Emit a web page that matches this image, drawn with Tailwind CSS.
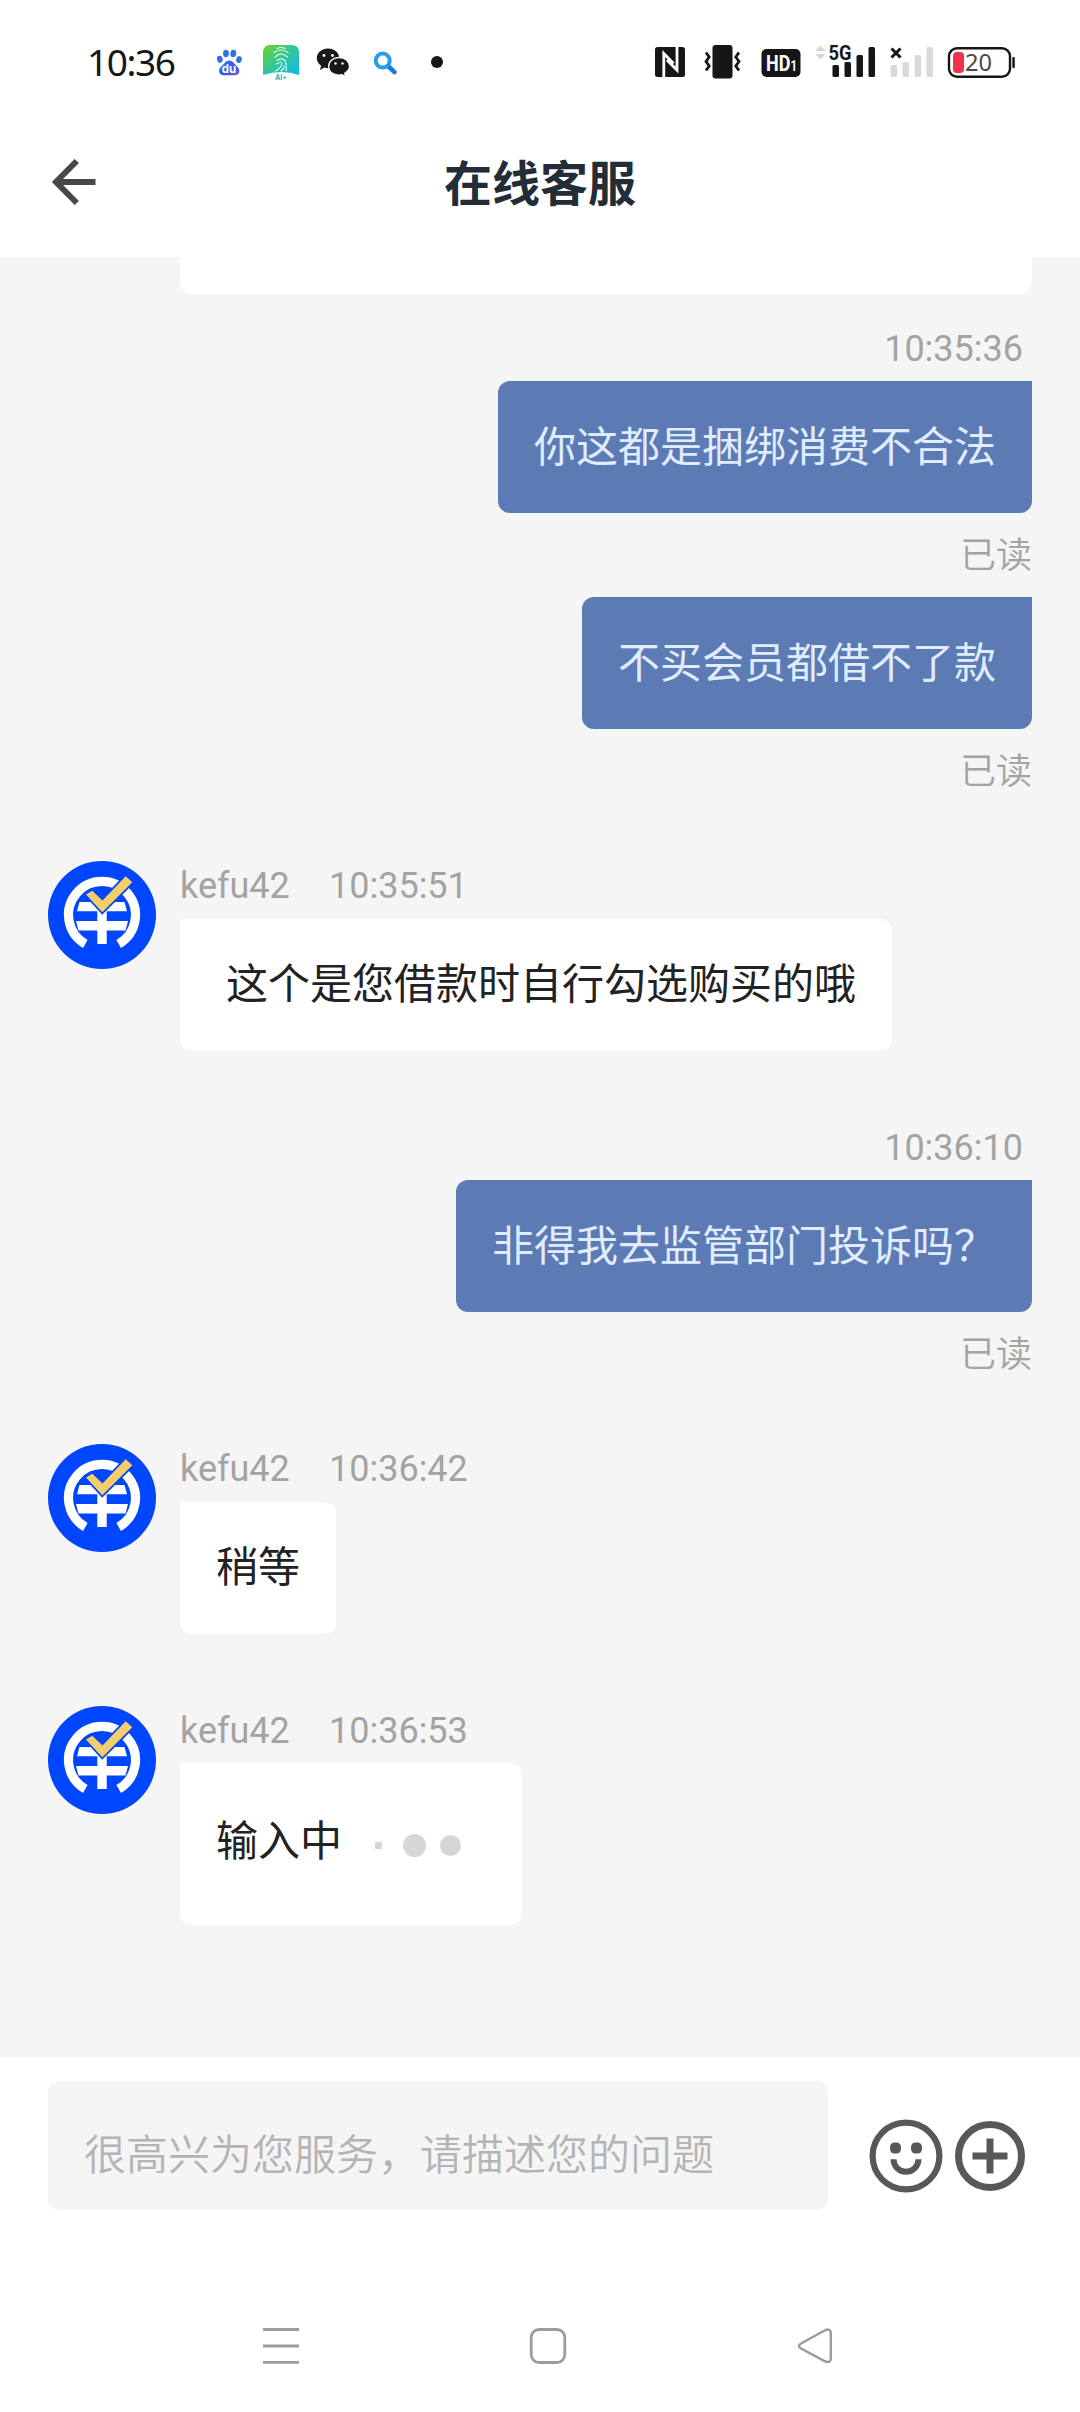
<!DOCTYPE html>
<html lang="zh-CN">
<head>
<meta charset="utf-8">
<title>在线客服</title>
<script src="https://cdn.jsdelivr.net/npm/@tailwindcss/browser@4"></script>
</head>
<body class="w-[1080px] h-[2412px] overflow-hidden bg-white flex flex-col font-['Roboto','Noto_Sans_CJK_SC',sans-serif]">

<!-- shared avatar artwork -->
<svg class="hidden">
  <symbol id="avatar" viewBox="0 0 108 108">
    <circle cx="54" cy="54" r="54" fill="#0046fe"/>
    <path d="M37.3 83A33.5 33.5 0 1 1 70.7 83" fill="none" stroke="#fff" stroke-width="9.2"/>
    <path d="M31.5 41H76.5L79 50.3H29ZM28 60H80L77.500 69.500H30.500ZM49.300 48H58.700V83H49.300Z" fill="#fff"/>
    <path d="M38 33.500L44.300 29.800L54.500 39.500L77.700 15.300L84.300 21.300L54.300 51.300Z" fill="#f4ce68" stroke="#0046fe" stroke-width="3.500" paint-order="stroke"/>
  </symbol>
</svg>

<!-- status bar -->
<div class="h-[105px] shrink-0 flex items-center pt-[19px] pl-[87px] pr-[65px] justify-between">
  <div class="flex items-center h-[44px]">
    <span class="w-[130px] text-[37px] leading-[44px] tracking-[-1.4px] text-[#161616] font-['Noto_Sans']">10:36</span>
    <svg class="w-[26px] h-[44px]" viewBox="217 40 26 44">
      <defs><linearGradient id="paw" x1="0" y1="0" x2="1" y2="1"><stop offset="0" stop-color="#2f7cf6"/><stop offset=".6" stop-color="#3558e4"/><stop offset="1" stop-color="#9a50e0"/></linearGradient></defs>
      <g fill="#3270ea"><ellipse cx="219.800" cy="59.300" rx="2.900" ry="3.600" transform="rotate(-12 219.800 59.300)"/><ellipse cx="226" cy="53.500" rx="2.900" ry="3.700"/><ellipse cx="233.300" cy="53.500" rx="2.900" ry="3.700" transform="rotate(10 233.300 53.500)"/><ellipse cx="239" cy="59.600" rx="2.800" ry="3.500" transform="rotate(12 239 59.600)"/></g>
      <path d="M229.300 60.500c4 0 5.200 4 8 6.200 3.500 2.800 2.500 8.500-2 8.500h-12c-4.500 0-5.700-5.500-2.200-8.500 3-2.400 4-6.200 8.200-6.200z" fill="url(#paw)"/>
      <text x="229" y="72.500" text-anchor="middle" font-family="Inter" font-weight="700" font-size="11.500" fill="#fff">du</text>
    </svg>
    <svg class="w-[36px] h-[44px] ml-[20px]" viewBox="263 40 36 44">
      <defs><linearGradient id="fp" x1="0" y1="0" x2="1" y2="1"><stop offset="0" stop-color="#74d22c"/><stop offset=".5" stop-color="#2fc79a"/><stop offset="1" stop-color="#12b5f2"/></linearGradient></defs>
      <path d="M270 45h22q7 0 7 8v22q-18-6-36 0V53q0-8 7-8z" fill="url(#fp)"/>
      <g fill="none" stroke="#e9fff5" stroke-width="1.100" stroke-linecap="round"><path d="M277 48.500q4-2 8 0M274 52.500q7-5 14 0M275 57q6-6 12.500 0M277 60.500q4-3.500 8 0q1.500 3 1.200 10M276 64q2.500 0 4.500-2.500M282 62.500q0 5-6.500 8.500M284 66q0 3-3 5"/></g>
      <text x="281" y="79.500" text-anchor="middle" font-family="Inter" font-weight="700" font-size="7" fill="#22b7b7">AI+</text>
    </svg>
    <svg class="w-[34px] h-[44px] ml-[17px]" viewBox="316 40 34 44">
      <path d="M328 48.500c-6.300 0-11.200 4.300-11.200 9.600 0 3.200 1.700 5.900 4.300 7.600L320 70l4.300-2.400c6.500 2 15-1.500 15-9.500 0-5.300-5-9.600-11.300-9.600z" fill="#181818"/>
      <path d="M339 57.500c-5.900 0-10.300 4-10.300 8.900 0 6.600 7.200 10 13.300 8.300l3.600 2-.9-3.500c2.700-1.600 4.800-4.200 4.800-6.800 0-4.900-4.600-8.900-10.500-8.900z" fill="#181818" stroke="#fff" stroke-width="1.300"/>
      <g fill="#fff"><circle cx="324" cy="55.500" r="1.400"/><circle cx="332.500" cy="55.500" r="1.400"/><circle cx="335.500" cy="63.500" r="1.200"/><circle cx="342.500" cy="63.500" r="1.200"/></g>
    </svg>
    <svg class="w-[34px] h-[44px] ml-[17px]" viewBox="367 40 34 44">
      <path d="M388 66L394.500 72.200" stroke="#1b78e8" stroke-width="4.500" stroke-linecap="round"/>
      <circle cx="382.700" cy="60.600" r="7" fill="none" stroke="#269ee8" stroke-width="4"/>
    </svg>
    <div class="size-[12px] rounded-full bg-[#161616] ml-[30px]"></div>
  </div>
  <div class="flex items-center h-[44px]">
    <svg class="w-[30px] h-[44px]" viewBox="655 40 30 44">
      <rect x="655" y="47" width="30" height="30" rx="2.500" fill="#161616"/>
      <path d="M663.800 77V53.500L673.500 63.500M677 47V70L667 60" fill="none" stroke="#fff" stroke-width="2.800"/>
    </svg>
    <svg class="w-[38px] h-[44px] ml-[18px]" viewBox="703 40 38 44">
      <rect x="712.500" y="45" width="20" height="33.500" rx="3" fill="#161616"/>
      <path d="M706 52.500l3.200 4.500-3.200 4.500 3.200 4.500-3.200 4.500M739 52.500l-3.200 4.500 3.200 4.500-3.200 4.500 3.200 4.500" fill="none" stroke="#161616" stroke-width="2.800"/>
    </svg>
    <svg class="w-[40px] h-[44px] ml-[20px]" viewBox="761 40 40 44">
      <rect x="761.500" y="49" width="39" height="28" rx="5" fill="#161616"/>
      <text x="766" y="71" font-family="Roboto" font-weight="700" font-size="22" textLength="31" lengthAdjust="spacingAndGlyphs" fill="#fff">HD<tspan font-size="14">1</tspan></text>
    </svg>
    <svg class="w-[60px] h-[44px] ml-[15px]" viewBox="816 40 60 44">
      <path d="M820.500 45.500l5 5.500h-10zM820.500 59.500l5-5.500h-10z" fill="#d5d5d5"/>
      <text x="828.500" y="59.700" font-family="Roboto" font-weight="700" font-size="20.500" textLength="23" lengthAdjust="spacingAndGlyphs" fill="#161616">5G</text>
      <g fill="#161616"><rect x="832.500" y="65" width="6.500" height="12" rx="1.500"/><rect x="844.500" y="62" width="6.500" height="15" rx="1.500"/><rect x="856.500" y="55" width="6.500" height="22" rx="1.500"/><rect x="868.500" y="47" width="6.500" height="30" rx="1.500"/></g>
    </svg>
    <svg class="w-[44px] h-[44px] ml-[14px]" viewBox="890 40 44 44">
      <path d="M891.500 48.500l9 9M900.500 48.500l-9 9" stroke="#161616" stroke-width="3"/>
      <g fill="#d9d9d9"><rect x="890.500" y="65" width="6.500" height="12" rx="1.500"/><rect x="902.500" y="62" width="6.500" height="15" rx="1.500"/><rect x="914.500" y="55" width="6.500" height="22" rx="1.500"/><rect x="926.500" y="47" width="6.500" height="30" rx="1.500"/></g>
    </svg>
    <svg class="w-[68px] h-[44px] ml-[13px]" viewBox="947 40 68 44">
      <rect x="949" y="48.200" width="61" height="28.600" rx="8" fill="#fff" stroke="#161616" stroke-width="2.400"/>
      <rect x="1012.300" y="57" width="2.500" height="11" rx="1" fill="#161616"/>
      <rect x="953" y="52" width="11" height="21" rx="4" fill="#ee334b"/>
      <text x="965" y="70.700" font-family="Noto Sans" font-size="23" fill="#4a4a4a" textLength="27" lengthAdjust="spacingAndGlyphs">20</text>
    </svg>
  </div>
</div>

<!-- title bar -->
<header class="h-[152px] shrink-0 grid grid-cols-[1fr_auto_1fr] items-start pl-[50px] pt-[50px]">
  <svg class="w-[48px] h-[56px]" viewBox="50 155 48 56">
    <path d="M95.500 182H56M76.800 161L56 182L76.800 203" fill="none" stroke="#484848" stroke-width="6"/>
  </svg>
  <h1 class="text-[48px] leading-[54px] pt-[3px] font-bold text-[#222d38] mr-[50px]">在线客服</h1>
</header>

<!-- conversation -->
<main class="h-[1800px] shrink-0 bg-[#f5f5f5] px-12 flex flex-col overflow-hidden">
  <div class="ml-[132px] h-[37px] shrink-0 rounded-b-[12px] bg-white"></div>

  <div class="mt-[34px] flex flex-col items-end text-[36px] leading-[42px] text-[#a3a3a3]">
    <time class="pr-[9px]">10:35:36</time>
    <div class="mt-[11px] h-[132px] px-9 pt-0.5 flex items-center rounded-[12px] rounded-tr-none bg-[#5c7bb4] text-[42px] text-[#e0ecff]">你这都是捆绑消费不合法</div>
    <span class="mt-[22px] font-[350]">已读</span>
    <div class="mt-5 h-[132px] px-9 pt-0.5 flex items-center rounded-[12px] rounded-tr-none bg-[#5c7bb4] text-[42px] text-[#e0ecff]">不买会员都借不了款</div>
    <span class="mt-[22px] font-[350]">已读</span>
  </div>

  <div class="mt-[68px] flex gap-6 items-start">
    <svg class="size-[108px]"><use href="#avatar"/></svg>
    <div class="flex flex-col items-start pt-1">
      <div class="flex text-[36px] leading-[42px] text-[#a3a3a3]"><span class="w-[149px]">kefu42</span><time>10:35:51</time></div>
      <div class="mt-3 h-[132px] pl-[46px] pr-9 pb-px flex items-center rounded-[12px] rounded-tl-none bg-white text-[42px] text-[#222]">这个是您借款时自行勾选购买的哦</div>
    </div>
  </div>

  <div class="mt-[76px] flex flex-col items-end text-[36px] leading-[42px] text-[#a3a3a3]">
    <time class="pr-[9px]">10:36:10</time>
    <div class="mt-[11px] h-[132px] px-9 pt-0.5 flex items-center rounded-[12px] rounded-tr-none bg-[#5c7bb4] text-[42px] text-[#e0ecff]">非得我去监管部门投诉吗？</div>
    <span class="mt-[22px] font-[350]">已读</span>
  </div>

  <div class="mt-[68px] flex gap-6 items-start">
    <svg class="size-[108px]"><use href="#avatar"/></svg>
    <div class="flex flex-col items-start pt-1">
      <div class="flex text-[36px] leading-[42px] text-[#a3a3a3]"><span class="w-[149px]">kefu42</span><time>10:36:42</time></div>
      <div class="mt-3 h-[132px] px-9 pb-px flex items-center rounded-[12px] rounded-tl-none bg-white text-[42px] text-[#222]">稍等</div>
    </div>
  </div>

  <div class="mt-[72px] flex gap-6 items-start">
    <svg class="size-[108px]"><use href="#avatar"/></svg>
    <div class="flex flex-col items-start pt-1">
      <div class="flex text-[36px] leading-[42px] text-[#a3a3a3]"><span class="w-[149px]">kefu42</span><time>10:36:53</time></div>
      <div class="mt-[11px] h-[162px] w-[342px] pl-9 flex items-center rounded-[12px] bg-white rounded-tl-none">
        <span class="text-[42px] text-[#222] pb-[5px]">输入中</span>
        <div class="flex items-center ml-[33px] pt-0.5">
          <i class="size-[7px] bg-[#d6d6d6]"></i>
          <i class="size-[23px] rounded-full bg-[#d6d6d6] ml-[21px]"></i>
          <i class="size-[21px] rounded-full bg-[#d6d6d6] ml-[14px]"></i>
        </div>
      </div>
    </div>
  </div>
</main>

<!-- message composer -->
<footer class="h-[201px] shrink-0 pl-12 pt-6 flex items-start">
  <div class="w-[780px] h-[129px] rounded-[12px] bg-[#f5f5f5] pl-9 pt-[20px] flex items-center text-[42px] font-[350] text-[#b4b4b4]">很高兴为您服务，请描述您的问题</div>
  <svg class="w-[74px] h-[74px] mt-[38px] ml-[41px]" viewBox="-37 -37 74 74">
    <circle r="33.400" fill="none" stroke="#585858" stroke-width="6.200"/>
    <rect x="-16" y="-13.500" width="11" height="11" rx="4.500" fill="#585858"/><rect x="5" y="-13.500" width="11" height="11" rx="4.500" fill="#585858"/>
    <path d="M-12.500 3.200A12.500 12.500 0 0 0 12.500 3.200" fill="none" stroke="#585858" stroke-width="6"/>
  </svg>
  <svg class="w-[70px] h-[70px] mt-[40px] ml-[12px]" viewBox="-35 -35 70 70">
    <circle r="31.500" fill="none" stroke="#585858" stroke-width="7"/>
    <path d="M-17.500 0H17.500M0-17.500V17.500" stroke="#585858" stroke-width="7"/>
  </svg>
</footer>

<!-- system navigation -->
<nav class="flex-1 flex items-start justify-between pl-[262px] pr-[246px] pt-[68px]">
  <svg class="w-[38px] h-[40px]" viewBox="262 2326 38 40"><path d="M263 2329.500H299M263 2346H299M263 2362.300H299" stroke="#9c9c9c" stroke-width="2.800"/></svg>
  <svg class="w-[38px] h-[40px]" viewBox="529 2326 38 40"><rect x="531.200" y="2329.500" width="33.600" height="33" rx="8" fill="none" stroke="#9c9c9c" stroke-width="2.800"/></svg>
  <svg class="w-[38px] h-[40px]" viewBox="796 2326 38 40"><path d="M825.500 2330L801 2343.500Q797 2346 801 2348.500L825.500 2361.500Q830.500 2363 830.800 2359V2332.500Q830.500 2328.500 825.500 2330Z" fill="none" stroke="#9c9c9c" stroke-width="2.500"/></svg>
</nav>
</body>
</html>
